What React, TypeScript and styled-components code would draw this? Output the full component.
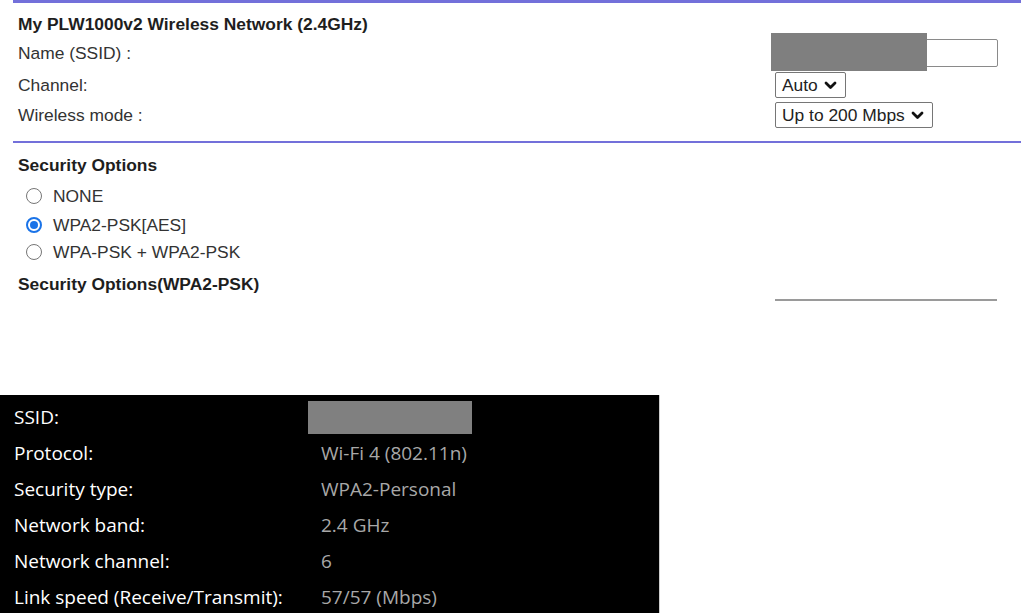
import React from "react";
import styled, { createGlobalStyle } from "styled-components";

const Global = createGlobalStyle`
  html, body { margin: 0; padding: 0; background: #fff; }
  body { width: 1024px; height: 613px; overflow: hidden; font-family: "Liberation Sans", Arial, sans-serif; }
`;

const Page = styled.div`
  display: flex;
  flex-direction: column;
  width: 1024px;
  height: 613px;
`;

const RouterPanel = styled.section`
  margin-left: 13px;
  width: 1008px;
  display: flex;
  flex-direction: column;
`;

const Rule = styled.div<{ $top?: number; $h?: number }>`
  height: ${(p) => p.$h ?? 3}px;
  margin-top: ${(p) => p.$top ?? 0}px;
  background: #7370da;
`;

const Section = styled.div`
  display: flex;
  flex-direction: column;
  padding-left: 5px;
`;

const Heading = styled.div<{ $top: number; $h: number }>`
  font-weight: bold;
  font-size: 17.4px;
  color: #1e1e1e;
  margin-top: ${(p) => p.$top}px;
  height: ${(p) => p.$h}px;
  line-height: ${(p) => p.$h}px;
  white-space: nowrap;
`;

const FieldRow = styled.div<{ $h: number; $top?: number }>`
  display: flex;
  align-items: center;
  justify-content: space-between;
  height: ${(p) => p.$h}px;
  margin-top: ${(p) => p.$top ?? 0}px;
`;

const Label = styled.span`
  font-size: 17.4px;
  color: #333;
`;

const Control = styled.div`
  width: 246px;
  display: flex;
`;

const InputWrap = styled.div`
  position: relative;
  width: 227px;
  height: 28px;
  border: 1px solid #8a8a8a;
  border-radius: 2px;
  background: #fff;
  box-sizing: border-box;
  margin-left: -4px;
`;

const Redact = styled.div`
  position: absolute;
  left: -1px;
  top: -7px;
  width: 156px;
  height: 38px;
  background: #7f7f7f;
`;

const Select = styled.div<{ $w: number }>`
  width: ${(p) => p.$w}px;
  height: 26px;
  box-sizing: border-box;
  border: 1px solid #767676;
  border-radius: 2px;
  display: flex;
  align-items: center;
  gap: 6px;
  padding: 0 0 0 6px;
  font-size: 17.4px;
  color: #222;
  white-space: nowrap;
`;

const Chevron = () => (
  <svg width="13" height="9" viewBox="0 0 13 9">
    <path d="M2 2 L6.5 6.5 L11 2" stroke="#111" strokeWidth="2.8" fill="none" strokeLinecap="round" strokeLinejoin="round" />
  </svg>
);

const RadioRow = styled.label<{ $h: number; $top?: number }>`
  display: flex;
  align-items: center;
  height: ${(p) => p.$h}px;
  margin-top: ${(p) => p.$top ?? 0}px;
  padding-left: 8px;
  gap: 11px;
  font-size: 17.4px;
  color: #333;
`;

const RadioDot = styled.span<{ $on?: boolean }>`
  width: 16px;
  height: 16px;
  box-sizing: border-box;
  border-radius: 50%;
  border: ${(p) => (p.$on ? "2px solid #1a73e8" : "1px solid #767676")};
  display: flex;
  align-items: center;
  justify-content: center;
  &::after {
    content: "";
    display: ${(p) => (p.$on ? "block" : "none")};
    width: 8px;
    height: 8px;
    border-radius: 50%;
    background: #1a73e8;
  }
`;

const PskRow = styled.div`
  display: flex;
  justify-content: space-between;
  align-items: flex-start;
  padding-right: 24px;
`;

const Underline = styled.div`
  width: 222px;
  height: 2px;
  background: #9a9a9a;
  margin-top: 35px;
`;

const Spacer = styled.div`
  flex: 1;
`;

const InfoPanel = styled.section`
  width: 660px;
  height: 218px;
  background: #000;
  border-right: 1px solid #ccc;
  box-sizing: border-box;
  display: grid;
  grid-template-columns: 307px 1fr;
  grid-auto-rows: 36px;
  padding-top: 4px;
  font-family: "Open Sans", "Noto Sans", sans-serif;
  font-size: 19px;
`;

const InfoLabel = styled.div`
  color: #fff;
  padding-left: 14px;
  display: flex;
  align-items: center;
  white-space: nowrap;
`;

const InfoValue = styled.div`
  color: #a8a8a8;
  padding-left: 14px;
  display: flex;
  align-items: center;
  white-space: nowrap;
`;

const SsidBlock = styled.div`
  width: 164px;
  height: 33px;
  background: #808080;
  margin-left: -13px;
`;

const rows: [string, string | null][] = [
  ["SSID:", null],
  ["Protocol:", "Wi-Fi 4 (802.11n)"],
  ["Security type:", "WPA2-Personal"],
  ["Network band:", "2.4 GHz"],
  ["Network channel:", "6"],
  ["Link speed (Receive/Transmit):", "57/57 (Mbps)"],
];

export default function App() {
  return (
    <Page>
      <Global />
      <RouterPanel>
        <Rule />
        <Section>
          <Heading $top={11} $h={20}>My PLW1000v2 Wireless Network (2.4GHz)</Heading>
          <FieldRow $h={30} $top={4}>
            <Label>Name (SSID) :</Label>
            <Control>
              <InputWrap>
                <Redact />
              </InputWrap>
            </Control>
          </FieldRow>
          <FieldRow $h={34}>
            <Label>Channel:</Label>
            <Control>
              <Select $w={71}>
                Auto <Chevron />
              </Select>
            </Control>
          </FieldRow>
          <FieldRow $h={26}>
            <Label>Wireless mode :</Label>
            <Control>
              <Select $w={158}>
                Up to 200 Mbps <Chevron />
              </Select>
            </Control>
          </FieldRow>
        </Section>
        <Rule $top={13} $h={2} />
        <Section>
          <Heading $top={12} $h={20}>Security Options</Heading>
          <RadioRow $h={28} $top={7}>
            <RadioDot />
            NONE
          </RadioRow>
          <RadioRow $h={30}>
            <RadioDot $on />
            WPA2-PSK[AES]
          </RadioRow>
          <RadioRow $h={24}>
            <RadioDot />
            WPA-PSK + WPA2-PSK
          </RadioRow>
          <PskRow>
            <Heading $top={10} $h={20}>Security Options(WPA2-PSK)</Heading>
            <Underline />
          </PskRow>
        </Section>
      </RouterPanel>
      <Spacer />
      <InfoPanel>
        {rows.map(([l, v]) => (
          <React.Fragment key={l}>
            <InfoLabel>{l}</InfoLabel>
            <InfoValue>{v === null ? <SsidBlock /> : v}</InfoValue>
          </React.Fragment>
        ))}
      </InfoPanel>
    </Page>
  );
}
